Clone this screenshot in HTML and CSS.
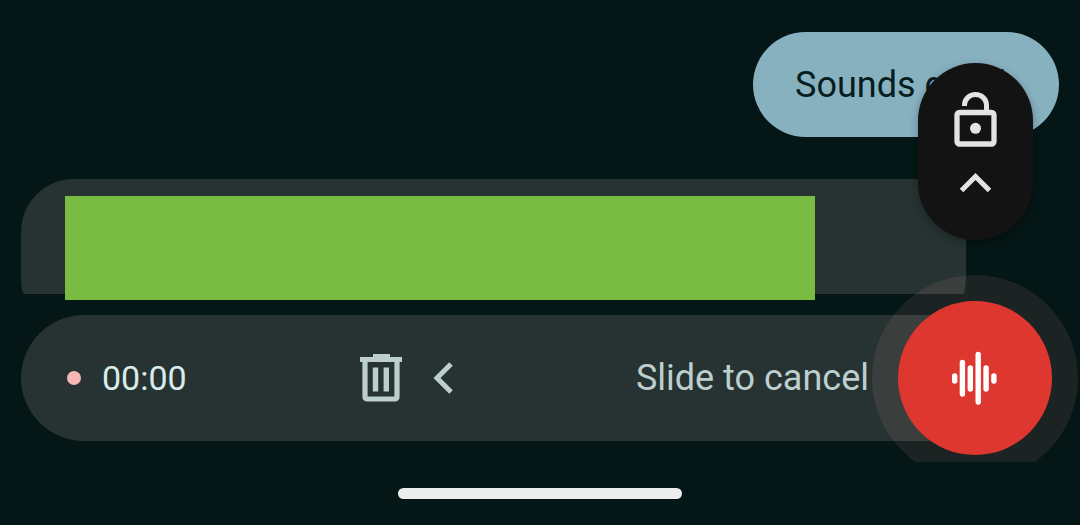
FILE: index.html
```html
<!DOCTYPE html>
<html lang="en">
<head>
<meta charset="utf-8">
<meta name="viewport" content="width=device-width, initial-scale=1">
<title>Voice message</title>
<link rel="stylesheet" href="styles.css">
</head>
<body>
<main class="chat">
  <section class="messages">
    <p class="bubble sent">Sounds good</p>
    <div class="received">
      <div class="bubble-back"></div>
      <div class="redaction"></div>
    </div>
  </section>

  <section class="composer">
    <div class="recorder">
      <span class="rec-dot"></span>
      <time class="timer">00:00</time>
      <button class="cancel" type="button" aria-label="Delete recording">
        <svg class="trash" viewBox="0 0 44 50" aria-hidden="true">
          <path d="M0 4h13V1h17v3h12v5H0z" fill="currentColor"/>
          <path d="M5 8v35.500q0 2.500 2.500 2.500h27q2.500 0 2.500-2.500V8" fill="none" stroke="currentColor" stroke-width="5.200"/>
          <path d="M15.500 14.500v24M26.300 14.500v24" stroke="currentColor" stroke-width="5.400"/>
        </svg>
        <svg class="chevron" viewBox="0 0 22 34" aria-hidden="true">
          <path d="M18 3L4 17l14 14" fill="none" stroke="currentColor" stroke-width="5"/>
        </svg>
      </button>
      <span class="hint">Slide to cancel</span>
    </div>
    <div class="record-area">
      <button class="record" type="button" aria-label="Record voice message">
        <svg class="wave" viewBox="0 0 46 54" aria-hidden="true">
          <path d="M2.700 25v5M10.400 11.500v31.500M18.300 17v21M26.200 3.500v47.500M34.100 17v21M41.900 25v5" fill="none" stroke="currentColor" stroke-width="5.400" stroke-linecap="round"/>
        </svg>
      </button>
    </div>
    <div class="lock">
      <svg class="padlock" viewBox="0 0 44 56" aria-hidden="true">
        <path d="M10.500 14v-1a11 10.500 0 0 1 22 0v8" fill="none" stroke="currentColor" stroke-width="5"/>
        <rect x="3" y="20.500" width="37" height="31.500" rx="2.500" fill="none" stroke="currentColor" stroke-width="5.300"/>
        <circle cx="21.500" cy="36.300" r="5.500" fill="currentColor"/>
      </svg>
      <svg class="caret" viewBox="0 0 34 22" aria-hidden="true">
        <path d="M2.500 18.500L16.500 4.500l14 14" fill="none" stroke="currentColor" stroke-width="5"/>
      </svg>
    </div>
  </section>

  <div class="home-bar"></div>
</main>
</body>
</html>
```
FILE: styles.css
```css
* {
  box-sizing: border-box;
}

body {
  margin: 0;
  background: #041615;
  color: #bccfce;
  font-family: Roboto, "Liberation Sans", sans-serif;
}

button {
  border: 0;
  padding: 0;
  background: none;
  color: inherit;
  font: inherit;
  cursor: pointer;
}

svg {
  display: block;
}

.chat {
  display: flex;
  flex-direction: column;
  min-height: 100vh;
  padding: 32px 21px 26px;
}

.messages {
  display: flex;
  flex-direction: column;
  gap: 42px;
}

.bubble {
  margin: 0;
  padding: 31px 42px 29px;
  border-radius: 53px;
  font-size: 36px;
  line-height: 45px;
}

.sent {
  align-self: flex-end;
  min-width: 306px;
  background: #88b1c0;
  color: #061d1f;
}

.received {
  display: grid;
  margin-right: 93px;
}

.bubble-back,
.redaction {
  grid-area: 1 / 1;
}

.bubble-back {
  margin-bottom: 6px;
  background: #263332;
  border-radius: 53px 53px 3px 3px / 53px 53px 20px 20px;
}

.redaction {
  height: 104px;
  margin: 17px 151px 0 44px;
  background: #78bd42;
}

.composer {
  position: relative;
  margin-top: 15px;
}

.recorder {
  display: flex;
  align-items: center;
  height: 126px;
  margin-right: 54px;
  padding: 0 136px 0 46px;
  border-radius: 63px;
  background: #263332;
}

.rec-dot {
  width: 14px;
  height: 14px;
  border-radius: 50%;
  background: #f5b8b4;
}

.timer {
  margin-left: 21px;
  color: #d9ebea;
  font-size: 34px;
}

.cancel {
  display: flex;
  align-items: center;
  gap: 29px;
  margin-left: 173px;
}

.trash {
  width: 44px;
  height: 50px;
}

.chevron {
  width: 22px;
  height: 34px;
}

.hint {
  margin-left: auto;
  font-size: 36px;
  white-space: nowrap;
}

.record-area {
  position: absolute;
  top: -40px;
  right: -19px;
  width: 206px;
  height: 187px;
  padding: 26px;
  overflow: hidden;
}

.record-area::before {
  content: "";
  position: absolute;
  top: 0;
  left: 0;
  width: 206px;
  height: 206px;
  border-radius: 50%;
  background: rgba(235, 165, 165, 0.1);
}

.record {
  position: relative;
  display: grid;
  place-items: center;
  width: 154px;
  height: 154px;
  border-radius: 50%;
  background: #de3730;
  color: #fff;
}

.wave {
  width: 46px;
  height: 54px;
}

.lock {
  position: absolute;
  right: 26px;
  bottom: 201px;
  display: flex;
  flex-direction: column;
  align-items: center;
  gap: 24px;
  width: 115px;
  height: 177px;
  padding-top: 29px;
  border-radius: 58px;
  background: #131313;
  box-shadow: 0 3px 8px rgba(0, 0, 0, 0.3);
  color: #e3e3e3;
}

.padlock {
  width: 44px;
  height: 56px;
}

.caret {
  width: 34px;
  height: 22px;
}

.home-bar {
  align-self: center;
  width: 284px;
  height: 11px;
  margin-top: auto;
  border-radius: 6px;
  background: #ebeeed;
}
```
